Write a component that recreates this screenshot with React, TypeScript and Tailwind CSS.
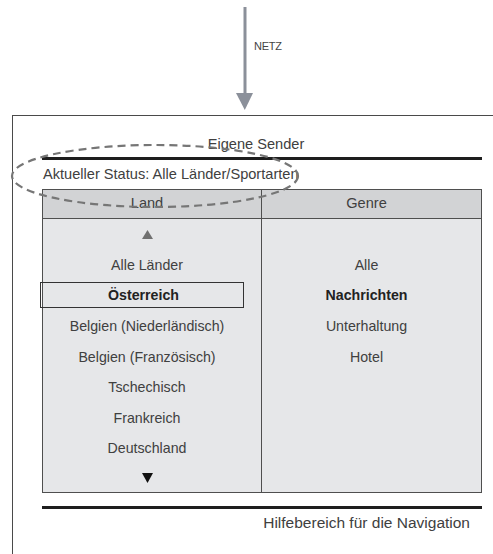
import React from "react";

const leftItems = [
  "Alle Länder",
  "Österreich",
  "Belgien (Niederländisch)",
  "Belgien (Französisch)",
  "Tschechisch",
  "Frankreich",
  "Deutschland",
];
const rightItems = ["Alle", "Nachrichten", "Unterhaltung", "Hotel", "", "", ""];

function Row({ children }: { children?: React.ReactNode }) {
  return (
    <div className="h-[30.6px] flex items-center justify-center pr-[10px] text-[14.2px] leading-[16px] text-[#404040]">
      {children}
    </div>
  );
}

export default function App() {
  return (
    <div
      className="relative w-[493px] h-[554px] bg-white overflow-hidden"
      style={{ fontFamily: '"Liberation Sans", Arial, sans-serif' }}
    >
      {/* arrow area */}
      <div className="h-[115px] flex">
        <svg width="18" height="115" viewBox="0 0 18 115" className="ml-[236px] shrink-0">
          <rect x="7.5" y="7" width="3" height="88" fill="#8b909a" />
          <polygon points="0,93 17,93 8.8,110" fill="#8b909a" />
        </svg>
        <div className="pt-[40px] text-[11px] leading-[13px] text-[#444] tracking-tight">NETZ</div>
      </div>

      {/* outer frame */}
      <div className="ml-[12px] w-[500px] h-[439px] border-l border-t border-[#4a4a4a] pl-[29px]">
        <div className="w-[440px] pt-[20px] pr-[12px] text-center text-[14.6px] leading-[16px] text-[#404040]">
          Eigene Sender
        </div>
        <div className="w-[440px] h-[3px] bg-[#1e1e1e] mt-[5px]" />
        <div className="mt-[6px] pl-[1px] text-[14.6px] leading-[16px] text-[#404040]">
          Aktueller Status: Alle Länder/Sportarten
        </div>

        {/* table */}
        <div className="mt-[7px] w-[440px] h-[304px] border border-[#4f4f4f] flex flex-col">
          <div className="h-[29px] flex bg-[#d2d3d5] border-b border-[#4f4f4f]">
            <div className="w-[219px] border-r border-[#4f4f4f] flex items-center justify-center pr-[10px] text-[14.6px] text-[#404040]">
              Land
            </div>
            <div className="flex-1 flex items-center justify-center pr-[10px] text-[14.6px] text-[#404040]">
              Genre
            </div>
          </div>
          <div className="flex-1 flex bg-[#e6e7e9]">
            <div className="w-[219px] border-r border-[#4f4f4f] flex flex-col">
              <Row>
                <svg width="11" height="9" viewBox="0 0 11 9">
                  <polygon points="5.5,0 11,9 0,9" fill="#707070" />
                </svg>
              </Row>
              {leftItems.map((t) =>
                t === "Österreich" ? (
                  <div key={t} className="h-[30.6px] flex items-center">
                    <div className="-ml-[3px] w-[204px] h-[26px] border border-[#333] flex items-center justify-center pl-[3px] text-[14.2px] font-bold text-[#222]">
                      {t}
                    </div>
                  </div>
                ) : (
                  <Row key={t}>{t}</Row>
                )
              )}
              <div className="flex-1 flex items-center justify-center pr-[10px]">
                <svg width="11" height="10" viewBox="0 0 11 10">
                  <polygon points="0,0 11,0 5.5,10" fill="#111" />
                </svg>
              </div>
            </div>
            <div className="flex-1 flex flex-col">
              <Row />
              {rightItems.map((t, i) =>
                t === "Nachrichten" ? (
                  <div
                    key={i}
                    className="h-[30.6px] flex items-center justify-center pr-[10px] text-[14.2px] font-bold text-[#222]"
                  >
                    {t}
                  </div>
                ) : (
                  <Row key={i}>{t}</Row>
                )
              )}
            </div>
          </div>
        </div>

        <div className="w-[440px] h-[3px] bg-[#1e1e1e] mt-[13px]" />
        <div className="w-[440px] mt-[6px] pr-[12px] text-right text-[15.5px] leading-[16px] text-[#404040]">
          Hilfebereich für die Navigation
        </div>
      </div>

      {/* dashed ellipse overlay */}
      <svg
        className="absolute left-0 top-0 pointer-events-none"
        width="493"
        height="554"
        viewBox="0 0 493 554"
      >
        <ellipse
          cx="155"
          cy="176"
          rx="143"
          ry="31"
          fill="none"
          stroke="#767676"
          strokeWidth="2.2"
          strokeDasharray="8 5"
        />
      </svg>
    </div>
  );
}
